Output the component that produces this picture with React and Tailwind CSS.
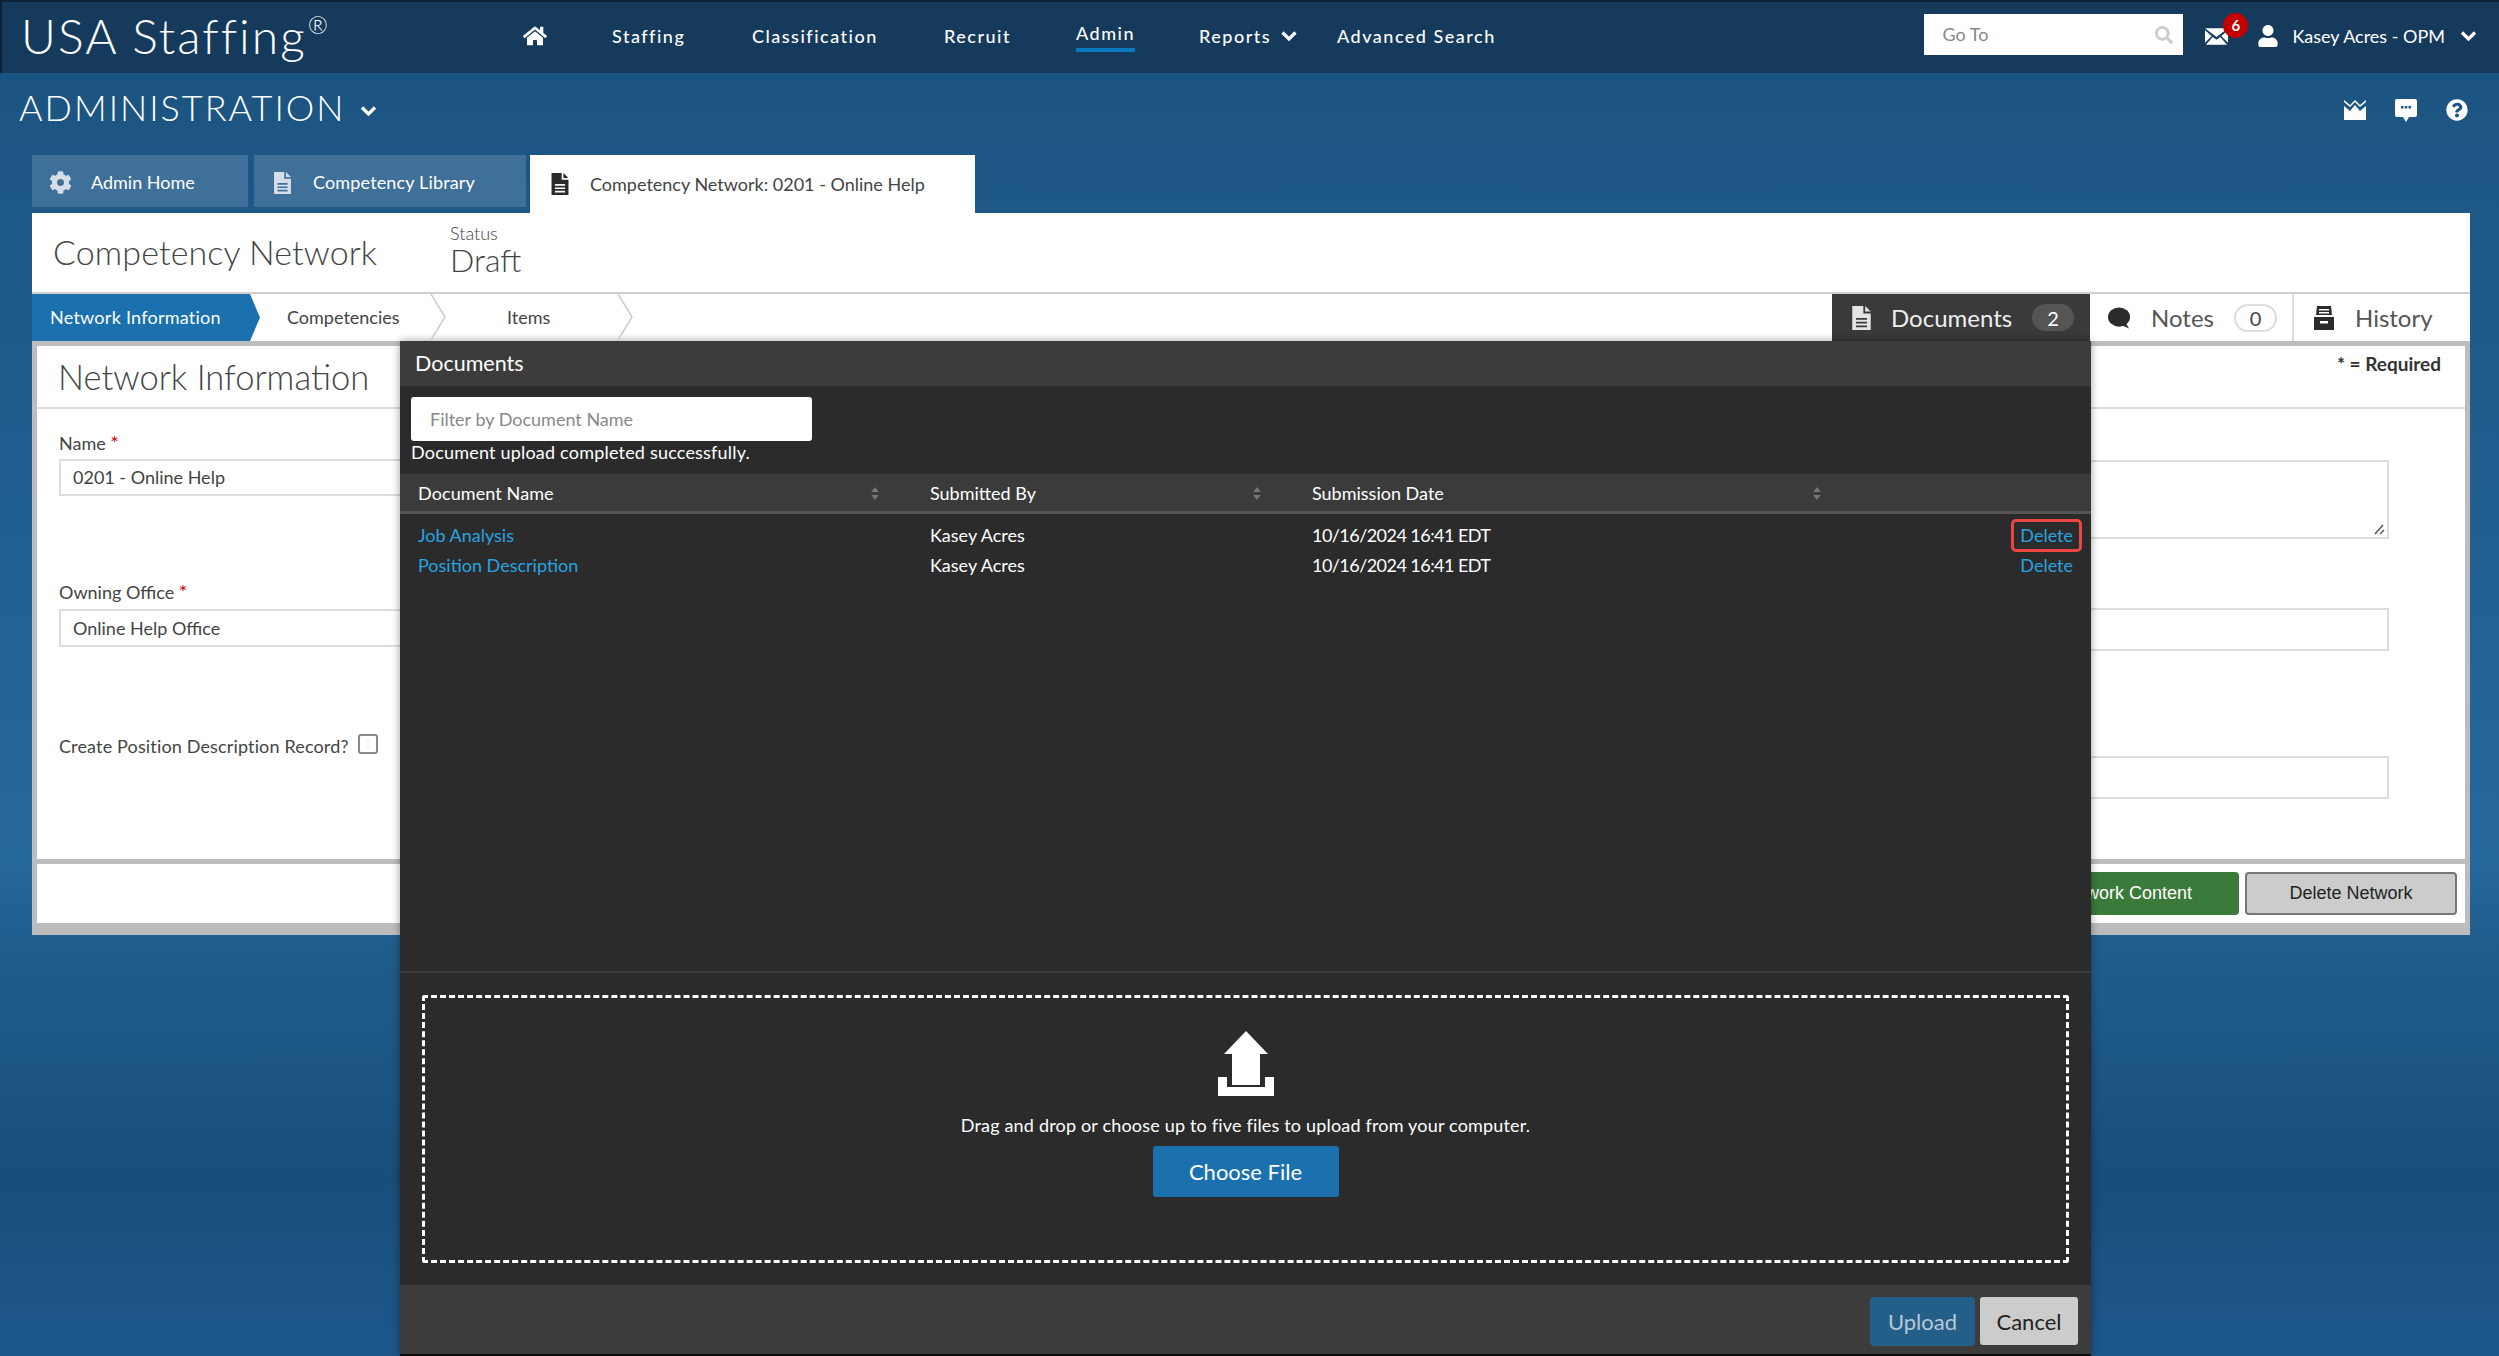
import { FaHome, FaCog, FaSearch, FaUser, FaQuestionCircle } from "react-icons/fa";

const Doc = ({ className }) => (
  <svg viewBox="0 0 20 26" className={className} fill="currentColor">
    <path d="M0 0h12v8h8v18H0z" />
    <path d="M14 0l6 6h-6z" />
    <path d="M4 13h12v2H4zM4 17h12v2H4zM4 21h12v2H4z" fill="var(--doc-line)" />
  </svg>
);

const Sort = ({ className }) => (
  <svg viewBox="0 0 8 14" className={className} fill="#777">
    <path d="M4 0l4 5.5H0zM4 14L0 8.5h8z" />
  </svg>
);

const Chevron = ({ className }) => (
  <svg viewBox="0 0 16 11" className={className} fill="none" stroke="currentColor" strokeWidth="3.200">
    <path d="M1.500 1.500L8 8l6.500-6.500" />
  </svg>
);

const navItems = [
  ["Staffing", "ml-[65px] w-[140px]"],
  ["Classification", "w-[192px]"],
  ["Recruit", "w-[132px]"],
  ["Admin", "w-[123px]"],
];

const FormField = ({ label, value, inputClass, wrapClass }) => (
  <div className={wrapClass}>
    <div className="text-[18px] leading-[24px] text-[#444]">
      {label} <span className="text-[20px] leading-none text-[#d0021b]">*</span>
    </div>
    <div className={`flex items-center border-2 border-[#ddd] pl-3 text-[18px] text-[#444] ${inputClass}`}>{value}</div>
  </div>
);

export default function App() {
  return (
    <div className="relative h-[1356px] w-[2499px] overflow-hidden bg-[linear-gradient(to_bottom,#1c5481_73px,#25689c_860px,#205d8c_950px,#184e7a_1177px,#1d578a_1356px)] font-['Lato',sans-serif]">
      {/* top bar */}
      <header className="flex h-[73px] items-center border-t-2 border-l-2 border-[#0d2236] bg-[#163a5c] pb-[3px] text-[18px] text-white">
        <div className="ml-[19px] w-[502px] text-[48px] leading-none font-light tracking-[2.050px]">
          USA Staffing<sup className="top-[-20px] ml-[1px] text-[24px]">®</sup>
        </div>
        <FaHome className="h-[22px] w-[24px]" />
        <nav className="flex items-center font-medium tracking-[1.500px]">
          {navItems.map(([name, cls]) => (
            <div key={name} className={cls}>
              <span className={name === "Admin" ? "inline-block border-b-4 border-[#0a7abf] pb-[1px]" : ""}>{name}</span>
            </div>
          ))}
          <div className="flex w-[138px] items-center gap-[10px]">
            Reports <Chevron className="h-[11px] w-[16px]" />
          </div>
          <div>Advanced Search</div>
        </nav>
        <div className="ml-auto -mt-[3px] flex h-[41px] w-[259px] items-center justify-between bg-white pr-[10px] pl-[18px] text-[#888]">
          Go To
          <FaSearch className="h-[18px] w-[18px] text-[#ccc]" />
        </div>
        <div className="relative ml-[22px]">
          <svg viewBox="0 0 24 17" className="h-[17px] w-[23px]" fill="#fff">
            <path d="M0 0h24L12 9zM0 2l7 6-7 7zM24 2l-7 6 7 7zM8 9l4 3 4-3 7 8H1z" />
          </svg>
          <span className="absolute -top-[15px] left-[18px] flex h-[25px] w-[25px] items-center justify-center rounded-full bg-[#c40000] text-[15px] font-bold text-white">6</span>
        </div>
        <FaUser className="ml-[29px] h-[22px] w-[22px]" />
        <span className="ml-[13px]">Kasey Acres - OPM</span>
        <Chevron className="mr-[22px] ml-[15px] h-[11px] w-[17px]" />
      </header>

      {/* section title */}
      <div className="flex h-[82px] items-center">
        <h1 className="ml-[19px] -translate-y-[7px] text-[36px] leading-none font-light tracking-[2px] text-white">ADMINISTRATION</h1>
        <Chevron className="ml-[14px] h-[11px] w-[17px] -translate-y-[3px] text-white" />
        <div className="mr-[31px] ml-auto flex -translate-y-[4px] items-center gap-[29px] text-white">
          <svg viewBox="0 0 22 20" className="h-[20px] w-[22px]" fill="currentColor">
            <path d="M0 6l6 5 5-6 5 6 6-5v14H0z" />
            <path d="M0 0l6 5 5-5 5 5 6-5v2l-6 5-5-5-5 5-6-5z" />
          </svg>
          <svg viewBox="0 0 22 23" className="h-[23px] w-[22px]" fill="currentColor">
            <path fillRule="evenodd" d="M2 0h18a2 2 0 012 2v14a2 2 0 01-2 2h-6l-3 5-3-5H2a2 2 0 01-2-2V2a2 2 0 012-2zM6 7h2.500v2.500H6zM9.800 7h2.500v2.500H9.800zM13.500 7H16v2.500h-2.500z" />
          </svg>
          <FaQuestionCircle className="h-[22px] w-[22px]" />
        </div>
      </div>

      {/* page tabs */}
      <div className="ml-[32px] flex h-[58px] w-[2438px] text-[18px]">
        <div className="flex h-[52px] w-[216px] items-center bg-[#3f7099] pt-[3px] pl-[17px] text-white">
          <FaCog className="h-[23px] w-[23px] text-[#d5dee6]" />
          <span className="ml-[19px]">Admin Home</span>
        </div>
        <div className="ml-[6px] flex h-[52px] w-[272px] items-center bg-[#3f7099] pt-[3px] pl-[19px] tracking-[0.15px] text-white [--doc-line:#3f7099]">
          <Doc className="h-[22px] w-[19px] text-[#d5dee6]" />
          <span className="ml-[21px]">Competency Library</span>
        </div>
        <div className="ml-[4px] flex w-[445px] items-center bg-white pl-[21px] text-[#444] [--doc-line:#fff]">
          <Doc className="h-[22px] w-[18px] text-[#2b2b2b]" />
          <span className="ml-[21px]">Competency Network: 0201 - Online Help</span>
        </div>
      </div>

      {/* main card */}
      <main className="ml-[32px] w-[2438px] bg-white">
        <div className="flex h-[79px] items-center pl-[21px] text-[#444]">
          <h2 className="-mt-[2px] w-[397px] text-[34px] leading-none font-light tracking-[0.1px]">Competency Network</h2>
          <div className="-mt-[4px]">
            <div className="text-[18px] leading-[18px] font-light">Status</div>
            <div className="text-[32px] leading-[36px] font-light">Draft</div>
          </div>
        </div>
        <div className="flex h-[49px] items-stretch border-t-2 border-[#d0d0d0] text-[18px] text-[#444]">
          <div className="flex w-[228px] items-center bg-[#1a71ae] pl-[18px] tracking-[0.25px] text-white [clip-path:polygon(0_0,218px_0,100%_50%,218px_100%,0_100%)]">
            Network Information
          </div>
          <div className="relative flex w-[185px] items-center pl-[27px]">Competencies</div>
          <div className="flex w-[204px] items-center pl-[62px]">Items</div>
          <div className="ml-auto flex w-[638px] items-stretch text-[24px] text-[#555]">
            <div className="flex w-[258px] items-center bg-[#3a3a3a] pl-[20px] text-[#eee] [--doc-line:#3a3a3a]">
              <Doc className="h-[24px] w-[19px] text-[#e4e4e4]" />
              <span className="ml-[20px]">Documents</span>
              <span className="ml-[20px] flex h-[27px] w-[42px] items-center justify-center rounded-full bg-[#555] text-[20px] text-white">2</span>
            </div>
            <div className="flex w-[204px] items-center border-r-2 border-[#ddd] pl-[18px]">
              <svg viewBox="0 0 24 22" className="h-[22px] w-[23px] text-[#2b2b2b]" fill="currentColor">
                <ellipse cx="11.500" cy="10" rx="11.500" ry="10" />
                <path d="M17 14l5 8-9-4z" />
              </svg>
              <span className="ml-[20px]">Notes</span>
              <span className="ml-[20px] flex h-[28px] w-[43px] items-center justify-center rounded-full border-2 border-[#ddd] text-[20px] text-[#444]">0</span>
            </div>
            <div className="flex flex-1 items-center pl-[19px]">
              <svg viewBox="0 0 22 24" className="h-[24px] w-[22px] text-[#2b2b2b]" fill="currentColor">
                <path d="M4 0h14l1 9H3zM1 11h20v13H1z" />
                <path d="M6 3h10v1.500H6zM6 6h10v1.500H6zM7 15h8v2.500H7z" fill="#fff" />
              </svg>
              <span className="ml-[20px]">History</span>
            </div>
          </div>
        </div>

        {/* form card with gray frame */}
        <div className="bg-[#bdbdbd] px-[5px] pt-[5px] pb-[12px]">
          <div className="h-[513px] bg-white">
            <div className="flex h-[63px] items-center justify-between border-b-2 border-[#ddd] pr-[24px] pl-[21px]">
              <h3 className="pt-[2px] text-[34.500px] leading-none font-light text-[#444]">Network Information</h3>
              <span className="-mt-[24px] text-[19px] font-bold text-[#333]">* = Required</span>
            </div>
            <div className="flex">
              <div className="w-[420px] pl-[22px]">
                <FormField label="Name" value="0201 - Online Help" wrapClass="pt-[22px]" inputClass="mt-1 h-[37px]" />
                <FormField label="Owning Office" value="Online Help Office" wrapClass="pt-[84px]" inputClass="mt-[5px] h-[38px]" />
                <div className="mt-[86px] flex items-center text-[18px] tracking-[0.15px] text-[#444]">
                  Create Position Description Record?
                  <span className="ml-[9px] h-[20px] w-[20px] shrink-0 -translate-y-[3px] rounded-[3px] border-2 border-[#888] bg-white" />
                </div>
              </div>
              <div className="ml-auto w-[1000px] pt-[51px] pr-[76px]">
                <div className="relative h-[79px] border-2 border-[#ddd]">
                  <svg viewBox="0 0 12 12" className="absolute right-[2px] bottom-[2px] h-[12px] w-[12px]" stroke="#555" strokeWidth="1.500">
                    <path d="M2 11L10 2M7 11l4-4" />
                  </svg>
                </div>
                <div className="mt-[69px] h-[43px] border-2 border-[#ddd]" />
                <div className="mt-[105px] h-[43px] border-2 border-[#ddd]" />
              </div>
            </div>
          </div>
          <div className="mt-[5px] flex h-[59px] items-center justify-end bg-white pr-[8px] font-['Liberation_Sans',sans-serif] text-[18px]">
            <div className="flex h-[43px] w-[400px] items-center justify-end rounded-[4px] bg-[#3a7a3a] pr-[47px] text-white">Publish Network Content</div>
            <div className="ml-[6px] flex h-[43px] w-[212px] items-center justify-center rounded-[4px] border-2 border-[#777] bg-[#ccc] text-[#222]">Delete Network</div>
          </div>
        </div>
      </main>

      {/* documents drawer */}
      <section className="absolute top-[341px] bottom-0 left-[400px] flex w-[1691px] flex-col border-b-2 border-[#0d0d0d] bg-[#2b2b2b] text-[18px] text-white shadow-[0_0_8px_rgba(0,0,0,0.4)]">
        <div className="flex h-[45px] shrink-0 items-center bg-[#3c3c3c] pl-[15px] text-[21.500px]">Documents</div>
        <div className="h-[88px] shrink-0 pt-[11px] pl-[11px]">
          <div className="flex h-[44px] w-[401px] items-center rounded-[3px] bg-white pl-[19px] text-[#888]">Filter by Document Name</div>
          <div className="leading-[23px] tracking-[0.2px]">Document upload completed successfully.</div>
        </div>
        <div className="grid h-[40px] shrink-0 grid-cols-[530px_382px_509px_1fr] items-center border-b-[3px] border-[#555] bg-[#3b3b3b] pt-[2px] text-[18px]">
          <div className="flex items-center justify-between pr-[51px] pl-[18px] tracking-[0.1px]">
            Document Name <Sort className="h-[13px] w-[8px]" />
          </div>
          <div className="flex items-center justify-between pr-[51px]">
            Submitted By <Sort className="h-[13px] w-[8px]" />
          </div>
          <div className="flex items-center justify-between">
            Submission Date <Sort className="h-[13px] w-[8px]" />
          </div>
          <div />
        </div>
        <div className="h-[459px] shrink-0 border-b-2 border-[#3a3a3a] pt-[6px]">
          {["Job Analysis", "Position Description"].map((doc, i) => (
            <div key={doc} className="grid h-[30px] grid-cols-[530px_382px_509px_1fr] items-center">
              <a className="pl-[18px] text-[#29a3e0]">{doc}</a>
              <div>Kasey Acres</div>
              <div className="tracking-[-0.55px]">10/16/2024 16:41 EDT</div>
              <div className="flex justify-end pr-[18px]">
                <a className={i === 0 ? "relative text-[#29a3e0] after:absolute after:-inset-x-[9px] after:-inset-y-[3px] after:rounded-[5px] after:border-[3px] after:border-[#ef4444]" : "text-[#29a3e0]"}>Delete</a>
              </div>
            </div>
          ))}
        </div>
        <div className="flex-1 pt-[22px] pr-[22px] pl-[22px]">
          <div className="flex h-[268px] flex-col items-center rounded-[3px] border-[3px] border-dashed border-white pt-[33px]">
            <svg viewBox="0 0 56 65" className="h-[65px] w-[56px]" fill="#fff">
              <path d="M28 0l22 23h-8v31H14V23H6z" />
              <path d="M0 46h9v10h38V46h9v19H0z" />
            </svg>
            <div className="mt-[16px] tracking-[0.18px]">Drag and drop or choose up to five files to upload from your computer.</div>
            <button className="mt-[7px] h-[51px] w-[186px] rounded-[3px] bg-[#1a71ae] text-[22px] text-white">Choose File</button>
          </div>
        </div>
        <div className="flex h-[69px] shrink-0 items-center justify-end gap-[5px] bg-[#3c3c3c] pt-[3px] pr-[13px] text-[22px]">
          <button className="h-[49px] w-[105px] rounded-[4px] bg-[#235f88] text-[#b7c9d5]">Upload</button>
          <button className="h-[48px] w-[98px] rounded-[3px] bg-[#ccc] text-[#222]">Cancel</button>
        </div>
      </section>

      {/* chevron separators on the step bar */}
      <svg className="absolute top-[294px] left-[430px] h-[46px] w-[16px]" viewBox="0 0 16 46" fill="none" stroke="#ccc" strokeWidth="1.500">
        <path d="M1 0l14 23L1 46" />
      </svg>
      <svg className="absolute top-[294px] left-[617px] h-[46px] w-[16px]" viewBox="0 0 16 46" fill="none" stroke="#ccc" strokeWidth="1.500">
        <path d="M1 0l14 23L1 46" />
      </svg>
    </div>
  );
}
